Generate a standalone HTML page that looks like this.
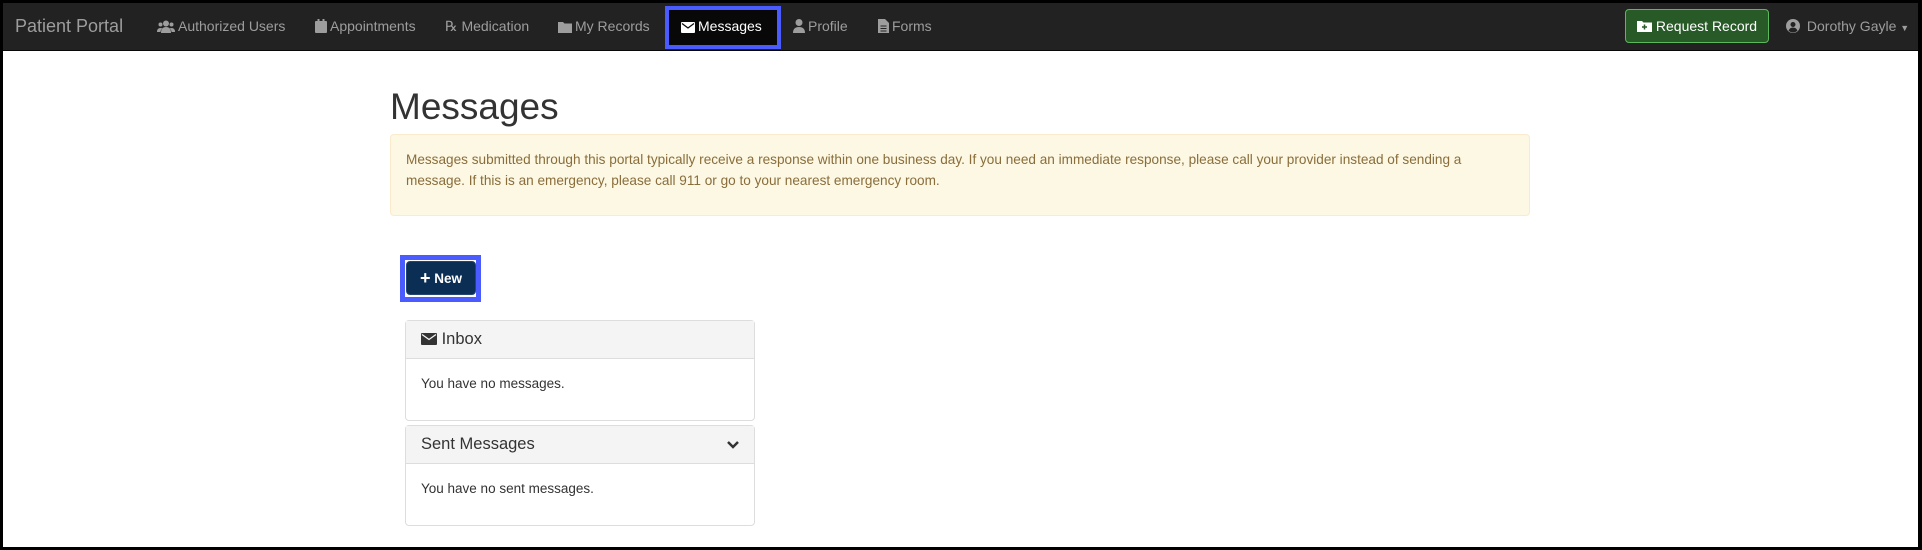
<!DOCTYPE html>
<html><head><meta charset="utf-8"><style>
*{box-sizing:border-box;margin:0;padding:0}
body{width:1922px;height:550px;background:#000;font-family:"Liberation Sans",Arial,sans-serif;overflow:hidden;position:relative}
.page{position:absolute;left:3px;top:3px;width:1915px;height:544px;background:#fff}
.nav{position:absolute;left:0;top:0;width:1915px;height:48px;background:#222;border-bottom:1px solid #080808}
.ni{position:absolute;top:0;height:47px;line-height:47px;color:#9d9d9d;font-size:14px;white-space:nowrap}
.ni svg{vertical-align:-2px;margin-right:3px}
.brand{font-size:18px}
.active{position:absolute;left:662px;top:3px;width:116px;height:43px;background:#080808;border:4px solid #4a5cff}
.rr{position:absolute;left:1622px;top:6px;width:144px;height:34px;background:#275a27;border:1px solid #5cb85c;border-radius:4px;color:#fff;font-size:14px;line-height:32px;text-align:center}
h1{position:absolute;left:387px;top:83px;font-size:37px;font-weight:400;color:#333}
.alert{position:absolute;left:387px;top:131px;width:1140px;height:82px;background:#fcf8e3;border:1px solid #faebcc;border-radius:4px;color:#8a6d3b;font-size:13.6px;line-height:20.5px;padding:15px 15px}
.hl{position:absolute;left:397px;top:252px;width:81px;height:47px;border:5px solid #4a5cff}
.btn{position:absolute;left:403px;top:258px;width:70px;height:34px;background:#0b2e55;border:1px solid #23466e;border-radius:4px;color:#fff;font-weight:bold;font-size:13.5px;line-height:32px;text-align:center}
.panel{position:absolute;left:402px;width:350px;border:1px solid #ddd;border-radius:4px;background:#fff}
.ph{height:38px;background:#f4f4f4;border-bottom:1px solid #ddd;padding:0 15px;line-height:37px;font-size:16.5px;color:#333;position:relative}
.pb{padding:17px 15px;font-size:13.5px;color:#333;height:61px}
</style></head><body><div class="page">
<div class="nav">
<div class="ni brand" style="left:12px">Patient Portal</div>
<div class="ni" style="left:154px"><svg width="18" height="13" viewBox="0 0 18 13" fill="#9d9d9d"><circle cx="9" cy="3.5" r="3"/><circle cx="3.5" cy="4.5" r="2"/><circle cx="14.5" cy="4.5" r="2"/><path d="M4 13q0-6 5-6t5 6zM0 12q0-4 3.5-4q1 0 1.8.5Q3.5 10 3.5 12zM18 12q0-4-3.5-4q-1 0-1.8.5 1.8 1.5 1.8 3.5z"/></svg>Authorized Users</div>
<div class="ni" style="left:312px"><svg width="12" height="14" viewBox="0 0 12 14" fill="#9d9d9d"><rect x="0" y="2" width="12" height="12" rx="1"/><rect x="2.5" y="0" width="2" height="3"/><rect x="7.5" y="0" width="2" height="3"/></svg>Appointments</div>
<div class="ni" style="left:442px"><span style="font-family:'Liberation Serif',serif">℞</span> Medication</div>
<div class="ni" style="left:555px"><svg width="14" height="12" viewBox="0 0 14 12" fill="#9d9d9d"><path d="M0 1h5l1.5 1.5H14V12H0z"/></svg>My Records</div>
<div class="active"></div>
<div class="ni" style="left:678px;color:#fff"><svg width="14" height="11" viewBox="0 0 14 11"><rect width="14" height="11" rx="1" fill="#fff"/><path d="M1 1.5l6 4.5 6-4.5" stroke="#080808" stroke-width="1.2" fill="none"/></svg>Messages</div>
<div class="ni" style="left:790px"><svg width="12" height="14" viewBox="0 0 12 14" fill="#9d9d9d"><circle cx="6" cy="3.5" r="3.5"/><path d="M0 14q0-6 6-6t6 6z"/></svg>Profile</div>
<div class="ni" style="left:875px"><svg width="11" height="14" viewBox="0 0 11 14" fill="#9d9d9d"><path d="M0 0h7l4 4v10H0z"/><path d="M2.5 7h6M2.5 9.5h6M2.5 12h6" stroke="#222" stroke-width="1"/></svg>Forms</div>
<div class="rr"><svg width="15" height="12" viewBox="0 0 15 12" style="vertical-align:-1px;margin-right:4px"><path d="M0 1h5l1.5 1.5H15V12H0z" fill="#fff"/><path d="M7.5 4.5v5M5 7h5" stroke="#275a27" stroke-width="1.5"/></svg>Request Record</div>
<div class="ni" style="left:1783px"><svg width="14" height="14" viewBox="0 0 14 14"><circle cx="7" cy="7" r="7" fill="#9d9d9d"/><circle cx="7" cy="5.5" r="2.5" fill="#222"/><path d="M2.5 11.5q1.5-3 4.5-3t4.5 3q-2 2-4.5 2t-4.5-2z" fill="#222"/></svg> Dorothy Gayle <span style="font-size:9px">▼</span></div>
</div>
<h1>Messages</h1>
<div class="alert">Messages submitted through this portal typically receive a response within one business day. If you need an immediate response, please call your provider instead of sending a message. If this is an emergency, please call 911 or go to your nearest emergency room.</div>
<div class="hl"></div>
<div class="btn"><span style="font-size:18px;vertical-align:-1px">+</span> New</div>
<div class="panel" style="top:317px"><div class="ph"><svg width="16" height="12" viewBox="0 0 16 12" style="vertical-align:-1px"><rect width="16" height="12" rx="1" fill="#333"/><path d="M1 1.5l7 5 7-5" stroke="#f4f4f4" stroke-width="1.3" fill="none"/></svg> Inbox</div><div class="pb">You have no messages.</div></div>
<div class="panel" style="top:422px"><div class="ph">Sent Messages<svg width="14" height="10" viewBox="0 0 14 10" style="position:absolute;right:14px;top:14px"><path d="M2 2l5 5 5-5" stroke="#333" stroke-width="2.5" fill="none"/></svg></div><div class="pb">You have no sent messages.</div></div>
</div></body></html>
